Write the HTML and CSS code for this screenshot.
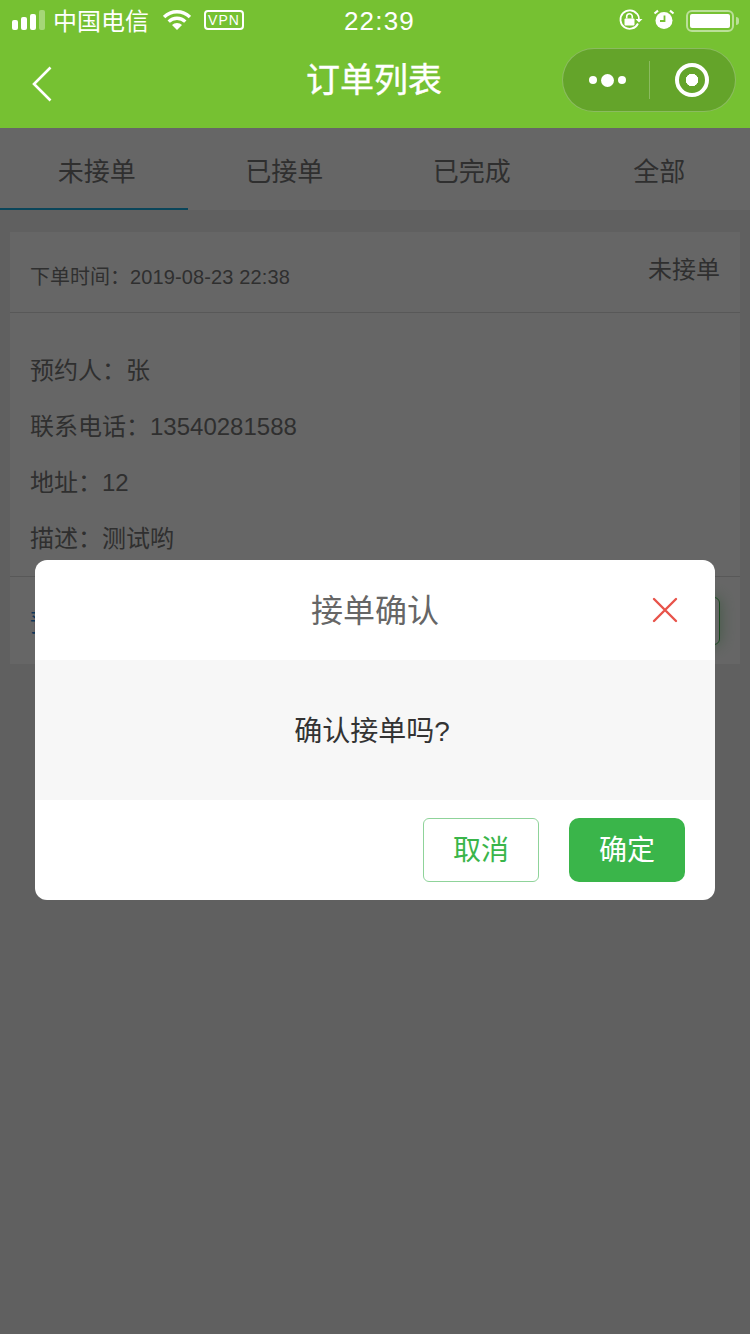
FILE: index.html
```html
<!DOCTYPE html>
<html lang="zh">
<head>
<meta charset="utf-8">
<title>订单列表</title>
<link rel="stylesheet" href="styles.css">
</head>
<body>
<div class="app">
  <header class="header">
    <div class="status">
      <div class="status-left">
        <span class="signal"><i class="b1"></i><i class="b2"></i><i class="b3"></i><i class="b4"></i></span>
        <span class="carrier">中国电信</span>
        <svg class="wifi" width="28" height="20" viewBox="0 0 28 20"><path d="M14 20 9 15A7 7 0 0 1 19 15Z" fill="#fff"/><path d="M5.700 11.700a11.750 11.750 0 0 1 16.600 0" fill="none" stroke="#fff" stroke-width="3.300"/><path d="M1.100 7.100a18.250 18.250 0 0 1 25.800 0" fill="none" stroke="#fff" stroke-width="3.300"/></svg>
        <span class="vpn">VPN</span>
      </div>
      <span class="clock">22:39</span>
      <div class="status-right">
        <svg width="26" height="22" viewBox="0 0 26 22"><path d="M20 14.500A9.200 9.200 0 1 1 19 5" fill="none" stroke="#fff" stroke-width="1.800"/><path d="M19 4.500A9 9 0 0 1 21 10.500" fill="none" stroke="#fff" stroke-width="1.800"/><path d="m17.500 10 3.500 3.500 3.500-3.500Z" fill="#fff"/><rect x="6.500" y="9.500" width="10" height="7" rx="1" fill="#fff"/><path d="M8.700 9.500V7.500a2.800 2.800 0 0 1 5.600 0v2" fill="none" stroke="#fff" stroke-width="1.600"/></svg>
        <svg width="22" height="22" viewBox="0 0 22 22"><circle cx="11" cy="11.500" r="8.500" fill="#fff"/><path d="M11.500 6.500V12H7" fill="none" stroke="#76c132" stroke-width="1.800"/><path d="M1.500 4.500 5 1.700M20.500 4.500 17 1.700" stroke="#fff" stroke-width="2.200"/></svg>
        <span class="battery"><span class="battery-body"><i></i></span><span class="battery-tip"></span></span>
      </div>
    </div>
    <div class="nav">
      <svg class="back" width="20" height="36" viewBox="0 0 20 36"><path d="M18.500 1.500 2 18l16.500 16.500" fill="none" stroke="#fff" stroke-width="2.600"/></svg>
      <h1 class="nav-title">订单列表</h1>
      <div class="capsule">
        <span class="dots"><i></i><i class="big"></i><i></i></span>
        <span class="cap-sep"></span>
        <span class="target"><i></i></span>
      </div>
    </div>
  </header>
  <main class="main">
    <nav class="tabs">
      <div class="tab active">未接单</div>
      <div class="tab">已接单</div>
      <div class="tab">已完成</div>
      <div class="tab">全部</div>
    </nav>
    <section class="list">
      <article class="card">
        <div class="card-head">
          <span class="time">下单时间：<span class="latin">2019-08-23 22:38</span></span>
          <span class="state">未接单</span>
        </div>
        <div class="card-body">
          <p class="row">预约人：张</p>
          <p class="row">联系电话：<span class="latin">13540281588</span></p>
          <p class="row">地址：<span class="latin">12</span></p>
          <p class="row">描述：测试哟</p>
        </div>
        <div class="card-foot">
          <span class="foot-link">预约详情</span>
          <span class="foot-btn">接单</span>
        </div>
      </article>
    </section>
    <div class="mask"></div>
    <div class="modal">
      <div class="modal-head">
        <span class="modal-title">接单确认</span>
        <svg class="close" width="26" height="26" viewBox="0 0 26 26"><path d="M2 2 24 24M24 2 2 24" stroke="#e8534a" stroke-width="2.400" stroke-linecap="round"/></svg>
      </div>
      <div class="modal-body">确认接单吗?</div>
      <div class="modal-foot">
        <span class="btn btn-line">取消</span>
        <span class="btn btn-fill">确定</span>
      </div>
    </div>
  </main>
</div>
</body>
</html>
```
FILE: styles.css
```css
* { box-sizing: border-box; margin: 0; padding: 0; }
html, body { width: 750px; height: 1334px; overflow: hidden; }
body { font-family: "Liberation Sans", "Noto Sans CJK SC", sans-serif; background: #f0f0f0; color: #333; }
i { display: block; font-style: normal; }
.app { width: 750px; height: 1334px; display: flex; flex-direction: column; }

.header { height: 128px; background: #76c132; color: #fff; flex: none; }
.status { height: 40px; position: relative; display: flex; align-items: center; justify-content: space-between; padding: 0 11px 0 12px; }
.status-left { display: flex; align-items: center; }
.signal { display: flex; align-items: flex-end; gap: 3px; width: 41px; height: 20px; }
.signal i { width: 6px; background: #fff; border-radius: 2px; }
.b1 { height: 10px; }
.b2 { height: 13px; }
.b3 { height: 16px; }
.b4 { height: 20px; opacity: .35; }
.carrier { font-size: 24px; width: 96px; line-height: 38px; padding-top: 3px; box-sizing: content-box; }
.wifi { margin-left: 14px; }
.vpn { margin-left: 13px; width: 40px; height: 20px; border: 2px solid #fff; border-radius: 4px; font-size: 14px; letter-spacing: 1px; line-height: 16px; text-align: center; }
.clock { position: absolute; left: 0; right: 0; text-align: center; font-size: 26px; letter-spacing: 1.200px; line-height: 40px; padding: 2px 0 0 9px; }
.status-right { display: flex; align-items: center; gap: 9px; }
.battery { display: flex; align-items: center; margin: 1px 0 0 2px; }
.battery-body { width: 48px; height: 22px; border: 2px solid rgba(255,255,255,.5); border-radius: 6px; padding: 2px; display: block; }
.battery-body i { width: 100%; height: 100%; background: #fff; border-radius: 2px; }
.battery-tip { width: 3px; height: 8px; background: rgba(255,255,255,.5); border-radius: 0 3px 3px 0; margin-left: 2px; }

.nav { height: 88px; display: flex; align-items: center; position: relative; padding: 0 14px 8px 32px; justify-content: space-between; }
.back { position: relative; top: 4px; }
.nav-title { position: absolute; left: 0; right: 2px; top: 17px; text-align: center; font-size: 34px; font-weight: 400; line-height: 46px; -webkit-text-stroke: .4px #fff; }
.capsule { width: 174px; height: 64px; border-radius: 32px; background: rgba(0,0,0,.15); border: 1px solid rgba(255,255,255,.25); display: flex; align-items: center; }
.dots { width: 86px; padding-left: 2px; display: flex; justify-content: center; align-items: center; gap: 4px; }
.dots i { width: 8px; height: 8px; background: #fff; border-radius: 50%; }
.dots .big { width: 13px; height: 13px; }
.cap-sep { width: 1px; height: 38px; background: rgba(255,255,255,.25); }
.target { flex: 1; display: flex; justify-content: center; align-items: center; padding-right: 1px; }
.target i { width: 34px; height: 34px; border-radius: 50%; border: 4px solid #fff; background: radial-gradient(circle, #fff 0, #fff 6px, transparent 6.500px); }

.main { flex: 1; position: relative; display: flex; flex-direction: column; }
.tabs { height: 82px; background: #fff; display: flex; flex: none; }
.tab { flex: 1; text-align: center; font-size: 26px; line-height: 88px; padding-left: 6px; color: #777; }
.tab.active { border-bottom: 2px solid #1aade0; }
.list { padding: 22px 10px 0; }
.card { background: #fff; height: 432px; display: flex; flex-direction: column; }
.card-head { height: 81px; border-bottom: 1px solid #ddd; display: flex; justify-content: space-between; padding: 0 20px; }
.time { font-size: 20px; line-height: 90px; color: #777; }
.state { font-size: 24px; line-height: 76px; color: #777; }
.latin { font-size: 20px; letter-spacing: .13px; }
.card-body { padding: 30px 20px 0; height: 264px; border-bottom: 1px solid #ddd; }
.row { font-size: 24px; line-height: 56px; color: #777; }
.row .latin { font-size: 24px; letter-spacing: 0; }
.card-foot { flex: 1; display: flex; justify-content: space-between; align-items: center; padding: 0 20px; }
.foot-link { font-size: 24px; color: #2b8ae0; }
.foot-btn { font-size: 24px; width: 116px; height: 48px; border: 1px solid #3ab54a; border-radius: 6px; text-align: center; line-height: 46px; color: #3ab54a; box-shadow: 0 0 16px rgba(58,181,74,.45); }

.mask { position: absolute; inset: 0; background: rgba(0,0,0,.6); }
.modal { position: absolute; left: 35px; top: 432px; width: 680px; height: 340px; background: #fff; border-radius: 12px; overflow: hidden; display: flex; flex-direction: column; }
.modal-head { height: 100px; position: relative; display: flex; align-items: center; justify-content: center; flex: none; padding-bottom: 4px; }
.modal-title { font-size: 32px; color: #666; }
.close { position: absolute; right: 37px; top: 37px; }
.modal-body { height: 140px; background: #f7f7f7; flex: none; text-align: center; font-size: 28px; line-height: 140px; padding: 2px 6px 0 0; color: #333; }
.modal-foot { flex: 1; display: flex; justify-content: flex-end; align-items: center; gap: 30px; padding-right: 30px; }
.btn { width: 116px; height: 64px; border-radius: 10px; text-align: center; font-size: 28px; line-height: 66px; }
.btn-line { border: 1px solid #8fd39a; color: #3ab54a; background: #fff; border-radius: 6px; line-height: 64px; }
.btn-fill { background: #3ab54a; color: #fff; }
```
